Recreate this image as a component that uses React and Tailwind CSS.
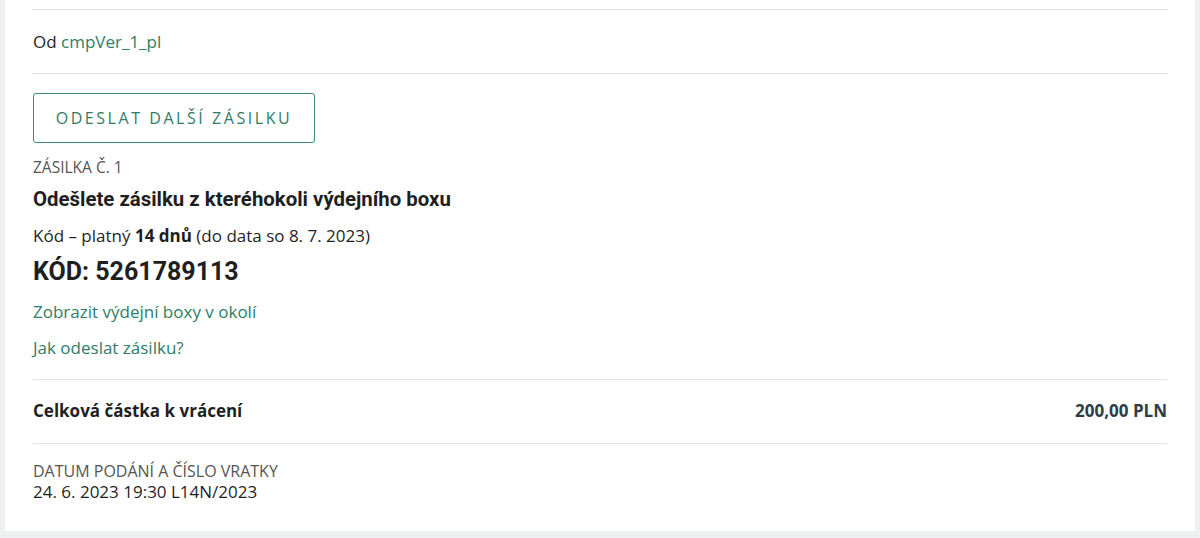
import React from 'react';

const green = 'text-[#2e7d67]';

export default function App() {
  return (
    <div className="min-h-[538px] bg-[#eef0f2] pl-[5px] pr-[5px] pb-[7px] font-['Open_Sans',sans-serif] text-[#1f1f1f]">
      <div className="bg-white px-[28px] pt-[9px] pb-[28px]">
        <div className="border-t border-[#e2e2e2]" />

        <div className="pt-[20px] pb-[19px] text-[17px] leading-[24px]">
          Od <span className={green}>cmpVer_1_pl</span>
        </div>

        <div className="border-t border-[#e2e2e2] pt-[19px]">
          <button className="h-[50px] w-[282px] rounded-[3px] border border-[#3f8a74] text-[16px] tracking-[0.16em] text-[#2e7d67]">
            ODESLAT DALŠÍ ZÁSILKU
          </button>

          <div className="mt-[14px] text-[15.5px] font-medium leading-[20px] text-[#555]">ZÁSILKA Č. 1</div>
          <div className="mt-[9px] font-['Roboto',sans-serif] text-[20.4px] font-bold leading-[26px] text-[#1f1f1f]">
            Odešlete zásilku z kteréhokoli výdejního boxu
          </div>
          <div className="mt-[12px] text-[17px] leading-[24px]">
            Kód – platný <span className="font-bold">14 dnů</span> (do data so 8. 7. 2023)
          </div>
          <div className="mt-[9px] font-['Roboto',sans-serif] text-[25px] font-bold leading-[30px]">
            KÓD: 5261789113
          </div>
          <div className={`mt-[13px] text-[17px] leading-[24px] ${green}`}>Zobrazit výdejní boxy v okolí</div>
          <div className={`mt-[12px] text-[17px] leading-[24px] ${green}`}>Jak odeslat zásilku?</div>
        </div>

        <div className="mt-[19px] border-t border-[#e2e2e2]" />
        <div className="flex items-center justify-between pt-[19px] pb-[20px] text-[17px] font-bold leading-[24px]">
          <span>Celková částka k vrácení</span>
          <span className="text-[#2f3d48]">200,00 PLN</span>
        </div>
        <div className="border-t border-[#e2e2e2]" />

        <div className="pt-[17px]">
          <div className="text-[16px] leading-[20px] text-[#555]">DATUM PODÁNÍ A ČÍSLO VRATKY</div>
          <div className="text-[17px] leading-[22px]">24. 6. 2023 19:30 L14N/2023</div>
        </div>
      </div>
    </div>
  );
}
